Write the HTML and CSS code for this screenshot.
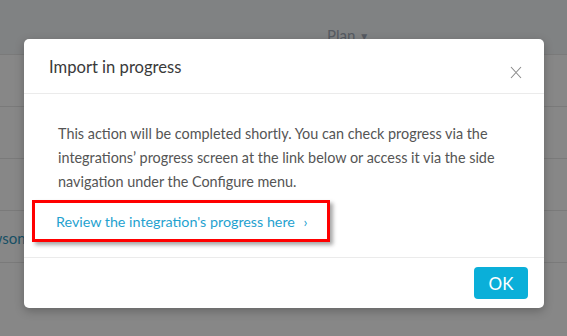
FILE: index.html
```html
<!DOCTYPE html>
<html>
<head>
<meta charset="utf-8">
<link rel="stylesheet" href="styles.css">
</head>
<body>
<div class="page">
  <div class="thead">
    <span class="th-plan">Plan <span class="caret">&#9660;</span></span>
  </div>
  <div class="row"></div>
  <div class="row"></div>
  <div class="row"></div>
  <div class="row"><span class="row-link">Dawson</span></div>
  <div class="row"></div>
</div>
<div class="overlay"></div>
<div class="modal">
  <div class="modal-header">
    <h2 class="modal-title">Import in progress</h2>
    <span class="close">
      <svg width="12" height="13" viewBox="0 0 12 13"><path d="M1 1 L11 12 M11 1 L1 12" stroke="#8a8a8a" stroke-width="1.1" fill="none"/></svg>
    </span>
  </div>
  <div class="modal-body">
    <p class="msg">This action will be completed shortly. You can check progress via the integrations’ progress screen at the link below or access it via the side navigation under the Configure menu.</p>
    <div class="highlight">
      <a class="review-link" href="#">Review the integration's progress here <span class="chev">&rsaquo;</span></a>
    </div>
  </div>
  <div class="modal-footer">
    <button class="ok">OK</button>
  </div>
</div>
</body>
</html>
```
FILE: styles.css
```css
html, body {
  margin: 0;
  padding: 0;
}
body {
  width: 567px;
  height: 336px;
  overflow: hidden;
  position: relative;
  background: #ffffff;
  font-family: Lato, "Open Sans", sans-serif;
}
.page {
  display: flex;
  flex-direction: column;
}
.thead {
  height: 54px;
  background: #f1f5f7;
  display: flex;
  align-items: flex-end;
  padding-left: 327px;
  box-sizing: border-box;
}
.th-plan {
  font-size: 15px;
  color: #a2abb8;
  margin-bottom: 10px;
}
.caret {
  font-size: 10px;
  position: relative;
  top: -1px;
}
.row {
  height: 52px;
  border-top: 1px solid #e6e6e6;
  box-sizing: border-box;
  display: flex;
  align-items: center;
}
.row-link {
  font-size: 15px;
  color: #2f98c0;
  margin-left: -28px;
  margin-top: 2px;
}
.overlay {
  position: absolute;
  inset: 0;
  background: rgba(0, 0, 0, 0.47);
}
.modal {
  position: absolute;
  left: 24px;
  top: 39px;
  width: 520px;
  height: 269px;
  background: #fff;
  border-radius: 5px;
  box-shadow: 0 3px 10px rgba(0, 0, 0, 0.25);
  display: flex;
  flex-direction: column;
}
.modal-header {
  height: 55px;
  box-sizing: border-box;
  border-bottom: 1px solid #ebebeb;
  display: flex;
  align-items: flex-start;
  justify-content: space-between;
  padding: 0 22px 0 25px;
}
.modal-title {
  margin: 0;
  font-weight: 400;
  font-size: 16.6px;
  color: #3a3a3a;
  line-height: 20px;
  padding-top: 18px;
}
.close {
  padding-top: 27px;
  line-height: 0;
}
.modal-body {
  flex: 1;
  padding: 28px 20px 0 34px;
  border-bottom: 1px solid #ebebeb;
}
.msg {
  margin: 0;
  font-size: 14.4px;
  line-height: 24px;
  color: #555;
}
.highlight {
  margin: 6px 0 0 -26px;
  width: 298px;
  height: 42px;
  box-sizing: border-box;
  border: 3px solid #ff0000;
  box-shadow: 3px 3px 4px rgba(0, 0, 0, 0.35);
  display: flex;
  align-items: center;
  padding-left: 21px;
}
.review-link {
  font-size: 14.3px;
  color: #1fa2cf;
  text-decoration: none;
}
.chev {
  margin-left: 5px;
  font-size: 14px;
}
.modal-footer {
  height: 50px;
  display: flex;
  justify-content: flex-end;
  align-items: center;
  padding-right: 16px;
}
.ok {
  width: 54px;
  height: 32px;
  border: none;
  border-radius: 4px;
  background: #0aafd9;
  color: #fff;
  font-family: Lato, "Open Sans", sans-serif;
  font-size: 17px;
}
```
